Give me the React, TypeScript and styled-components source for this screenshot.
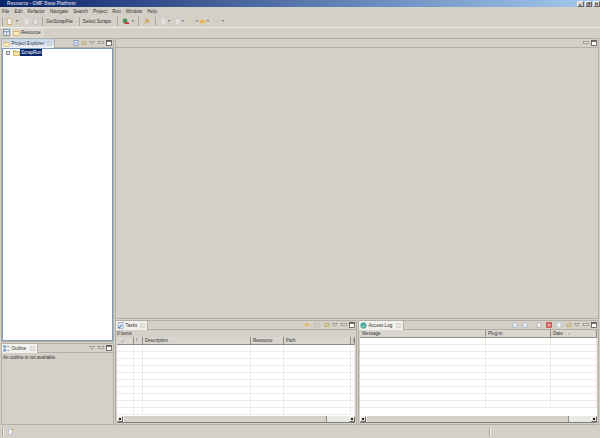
import React from "react";
import styled, { createGlobalStyle } from "styled-components";

const GlobalStyle = createGlobalStyle`
  html, body {
    margin: 0;
    padding: 0;
    background: #d4d0c8;
  }
  * {
    box-sizing: border-box;
  }
`;

const Window = styled.div`
  width: 600px;
  height: 438px;
  display: flex;
  flex-direction: column;
  overflow: hidden;
  background: #d4d0c8;
  color: #333;
  font-family: "Liberation Sans", Arial, sans-serif;
  font-size: 4.6px;
  line-height: 7px;
`;

const TitleBar = styled.div`
  height: 7px;
  flex: none;
  display: flex;
  align-items: center;
  padding: 0 0 0 7px;
  background: linear-gradient(90deg, #0a246a 0%, #a6caf0 100%);
  color: #c3c9dc;
  font-weight: bold;
  font-size: 4.7px;
`;

const TitleText = styled.span`
  flex: 1;
`;

const WinButton = styled.span`
  width: 7px;
  height: 6px;
  margin-left: 1px;
  background: #d4d0c8;
  border-top: 1px solid #eee;
  border-left: 1px solid #eee;
  border-right: 1px solid #666;
  border-bottom: 1px solid #666;
  display: flex;
  svg {
    width: 100%;
    height: 100%;
    display: block;
  }
`;

const MenuBar = styled.div`
  height: 8px;
  flex: none;
  display: flex;
  gap: 5.1px;
  padding: 1px 0 0 2px;
  align-items: center;
`;

const MenuItem = styled.span`
  white-space: nowrap;
`;

const ToolBar = styled.div`
  height: 12px;
  flex: none;
  display: flex;
  align-items: center;
  padding-left: 2px;
`;

const Sep = styled.span<{ $l?: number; $r?: number }>`
  width: 1px;
  height: 9px;
  flex: none;
  background: #aaa69c;
  margin-left: ${(p) => p.$l ?? 0}px;
  margin-right: ${(p) => p.$r ?? 0}px;
`;

const ToolIcon = styled.span<{ $dim?: boolean; $r?: number }>`
  width: 7px;
  height: 7px;
  flex: none;
  margin-right: ${(p) => p.$r ?? 0}px;
  display: inline-flex;
  opacity: ${(p) => (p.$dim ? 0.55 : 1)};
  svg {
    width: 100%;
    height: 100%;
    display: block;
  }
`;

const Caret = styled.span<{ $l: number; $r: number }>`
  width: 0;
  height: 0;
  flex: none;
  margin-left: ${(p) => p.$l}px;
  margin-right: ${(p) => p.$r}px;
  border-left: 1.5px solid transparent;
  border-right: 1.5px solid transparent;
  border-top: 2px solid #666;
`;

const ToolText = styled.span`
  white-space: nowrap;
`;

const PerspectiveBar = styled.div`
  height: 11px;
  flex: none;
  display: flex;
  align-items: center;
  padding: 0 0 1px 3px;
  border-top: 1px solid #ecebe6;
`;

const PerspectiveTab = styled.div`
  height: 10px;
  width: 33px;
  margin-left: 1px;
  display: flex;
  align-items: center;
  padding-left: 1px;
  gap: 1px;
  background: #dcd9d2;
  border-left: 1px solid #f0eeea;
`;

const Main = styled.div`
  flex: 1;
  min-height: 0;
  display: grid;
  grid-template-columns: 113px 1fr;
  gap: 1px;
  padding: 0 1px;
`;

const Column = styled.div`
  display: flex;
  flex-direction: column;
  gap: 1px;
  min-height: 0;
  min-width: 0;
`;

const Pane = styled.div<{ $h?: number; $grow?: boolean }>`
  ${(p) => (p.$h ? `height: ${p.$h}px; flex: none;` : "")}
  ${(p) => (p.$grow ? "flex: 1;" : "")}
  min-width: 0;
  min-height: 0;
  display: flex;
  flex-direction: column;
  border: 1px solid #b3afa5;
`;

const TabRow = styled.div`
  height: 9px;
  flex: none;
  display: flex;
  align-items: stretch;
  border-bottom: 1px solid #b3afa5;
`;

const Tab = styled.div<{ $w: number; $active?: boolean }>`
  width: ${(p) => p.$w}px;
  flex: none;
  display: flex;
  align-items: center;
  gap: 1.5px;
  padding-left: 1px;
  margin-bottom: -1px;
  background: ${(p) => (p.$active ? "linear-gradient(180deg, #c3d4ea, #eef2f8)" : "#f1f0ec")};
  border-right: 1px solid #b3afa5;
  white-space: nowrap;
`;

const TabLabel = styled.span`
  flex: 1;
`;

const TabClose = styled.span`
  width: 5px;
  height: 5px;
  margin-right: 2px;
  flex: none;
  display: flex;
  svg {
    width: 100%;
    height: 100%;
  }
`;

const TabTools = styled.div`
  flex: 1;
  display: flex;
  justify-content: flex-end;
  align-items: center;
  padding-right: 1px;
`;

const MiniIcon = styled.span<{ $l?: number }>`
  width: 6px;
  height: 6px;
  flex: none;
  margin-left: ${(p) => p.$l ?? 2.3}px;
  display: flex;
  svg {
    width: 100%;
    height: 100%;
    display: block;
  }
`;

const TreeBody = styled.div`
  flex: 1;
  background: #fff;
  border: 1px solid #7f9db9;
  padding: 0 0 0 3px;
  display: flex;
  align-items: flex-start;
`;

const Expander = styled.span`
  width: 4px;
  height: 4px;
  margin-top: 1.5px;
  border: 1px solid #888;
  background: #eee;
  flex: none;
`;

const TreeFolder = styled(ToolIcon)`
  margin: 0 0 0 3px;
`;

const Selected = styled.span`
  background: #0a246a;
  color: #fff;
  padding: 0 1px;
  height: 7px;
`;

const PaneNote = styled.div`
  padding: 1px;
`;

const Editor = styled(Pane)`
  height: 281px;
  flex: none;
`;

const EditorHead = styled.div`
  height: 9px;
  flex: none;
  display: flex;
  justify-content: flex-end;
  align-items: center;
  padding-right: 1px;
  border-bottom: 1px solid #b3afa5;
`;

const BottomRow = styled.div`
  flex: 1;
  min-height: 0;
  display: grid;
  grid-template-columns: 242px 1fr;
  gap: 1px;
`;

const ItemCount = styled.div`
  height: 7px;
  flex: none;
  padding-left: 1px;
`;

const TableWrap = styled.div`
  flex: 1;
  min-height: 0;
  margin: 0 1px 1px 1px;
  display: flex;
  flex-direction: column;
  background: #fff;
`;

const HeaderRow = styled.div<{ $cols: string }>`
  height: 8px;
  flex: none;
  display: grid;
  grid-template-columns: ${(p) => p.$cols};
  background: #d9d6cf;
  border-bottom: 1px solid #8f8c84;
`;

const HeaderCell = styled.div`
  padding-left: 2px;
  border-right: 1px solid #8f8c84;
  white-space: nowrap;
  overflow: hidden;
  display: flex;
  align-items: center;
  gap: 5px;
`;

const SortMark = styled.span`
  width: 0;
  height: 0;
  border-left: 1.5px solid transparent;
  border-right: 1.5px solid transparent;
  border-top: 2px solid #aaa;
`;

const CheckMark = styled.svg`
  width: 4px;
  height: 4px;
  margin-left: 2px;
`;

const Rows = styled.div`
  flex: 1;
  min-height: 0;
  overflow: hidden;
`;

const Row = styled.div<{ $cols: string }>`
  height: 7px;
  display: grid;
  grid-template-columns: ${(p) => p.$cols};
  border-bottom: 1px solid #ecebe6;
`;

const Cell = styled.div`
  border-right: 1px solid #ecebe6;
`;

const HScroll = styled.div`
  height: 7px;
  flex: none;
  display: flex;
  background: #d4d0c8;
  border-bottom: 1px solid #808080;
`;

const ScrollBtn = styled.span`
  width: 6px;
  flex: none;
  background: #e2dfd9;
  border: 1px solid;
  border-color: #f4f3f0 #6d6b65 #6d6b65 #f4f3f0;
  display: flex;
  align-items: center;
  justify-content: center;
  &::after {
    content: "";
    width: 2px;
    height: 2px;
    background: #222;
  }
`;

const ScrollThumb = styled.span`
  flex: 1;
  border-left: 1px solid #f4f3f0;
`;

const ScrollTrack = styled.span<{ $w: number }>`
  width: ${(p) => p.$w}px;
  flex: none;
  background: #ebe9e4;
  border-left: 1px solid #8f8c84;
`;

const StatusBar = styled.div`
  height: 13px;
  flex: none;
  display: flex;
  align-items: center;
  padding-left: 2px;
`;

const StatusGrip = styled.span<{ $left: number }>`
  width: 1px;
  height: 8px;
  flex: none;
  margin-left: ${(p) => p.$left}px;
  background: #aaa69c;
  box-shadow: 1px 0 0 #f0eeea;
`;

const StatusIcon = styled(ToolIcon)`
  margin-left: 5px;
`;

const Folder = ({ open = "#f0c860" }: { open?: string }) => (
  <svg viewBox="0 0 8 8">
    <path d="M0.5 2h3l1 1h3v4.5h-7z" fill={open} stroke="#b08a30" strokeWidth="0.6" />
    <path d="M1 4h6v3H1z" fill="#fbe9a8" />
  </svg>
);

const Perspective = () => (
  <svg viewBox="0 0 8 8">
    <path d="M1 3l2.5-2.5L5 3z" fill="#f4cd66" />
    <rect x="1" y="3" width="6" height="4.5" fill="#fdf1c4" stroke="#c89a3a" strokeWidth="0.6" />
  </svg>
);

const Page = ({ c = "#c7ccd6" }: { c?: string }) => (
  <svg viewBox="0 0 8 8">
    <path d="M1.5 0.5h3.5l1.5 1.5v5.5h-5z" fill="#eef0f3" stroke={c} strokeWidth="0.8" />
  </svg>
);

const Arrow = ({ c, left = false }: { c: string; left?: boolean }) => (
  <svg viewBox="0 0 8 8">
    <path d={left ? "M0.5 4L4 1v2h3.5v2H4v2z" : "M7.5 4L4 1v2H0.5v2H4v2z"} fill={c} />
  </svg>
);

const Cross = ({ c = "#9a988f", w = 0.8 }: { c?: string; w?: number }) => (
  <svg viewBox="0 0 8 8">
    <path d="M1 1h2l1 1 1-1h2v2L6 4l1 1v2H5L4 6 3 7H1V5l1-1-1-1z" fill="none" stroke={c} strokeWidth={w} />
  </svg>
);

const Sync = () => (
  <svg viewBox="0 0 8 8">
    <path d="M1 1.5h3v1.5H1zM4 5h3v1.5H4z" fill="#e3b341" />
    <path d="M4 2.2l2.4 0 0 2.4M4 5.8L1.6 5.8 1.6 3.4" fill="none" stroke="#7d7a3c" strokeWidth="0.7" />
  </svg>
);

const ViewMenu = () => (
  <svg viewBox="0 0 6 6">
    <path d="M0.7 1.5h4.6L3 4.2z" fill="#e9e7e2" stroke="#77756e" strokeWidth="0.6" />
  </svg>
);

const Minimize = () => (
  <svg viewBox="0 0 6 6">
    <rect x="0.5" y="1.5" width="5" height="2" fill="#e9e7e2" stroke="#77756e" strokeWidth="0.6" />
  </svg>
);

const Maximize = () => (
  <svg viewBox="0 0 6 6">
    <rect x="0.5" y="0.5" width="5" height="5" fill="#fff" stroke="#55534d" strokeWidth="0.8" />
    <rect x="0.5" y="0.5" width="5" height="1.3" fill="#55534d" />
  </svg>
);

const PaneControls = () => (
  <>
    <MiniIcon>
      <ViewMenu />
    </MiniIcon>
    <MiniIcon>
      <Minimize />
    </MiniIcon>
    <MiniIcon>
      <Maximize />
    </MiniIcon>
  </>
);

const CloseGlyph = () => (
  <TabClose>
    <Cross c="#a3a198" w={0.7} />
  </TabClose>
);

const menus = ["File", "Edit", "Refactor", "Navigate", "Search", "Project", "Run", "Window", "Help"];

const taskCols = "17px 9px 108px 33px 67px 1fr";
const logCols = "126px 65px 1fr";

const rowKeys = Array.from({ length: 10 }, (_, i) => i);

function DataTable({ cols, heads }: { cols: string; heads: React.ReactNode[] }) {
  return (
    <TableWrap>
      <HeaderRow $cols={cols}>
        {heads.map((h, i) => (
          <HeaderCell key={i}>{h}</HeaderCell>
        ))}
      </HeaderRow>
      <Rows>
        {rowKeys.map((r) => (
          <Row key={r} $cols={cols}>
            {heads.map((_, i) => (
              <Cell key={i} />
            ))}
          </Row>
        ))}
      </Rows>
      <HScroll>
        <ScrollBtn />
        <ScrollThumb />
        <ScrollTrack $w={23} />
        <ScrollBtn />
      </HScroll>
    </TableWrap>
  );
}

export default function App() {
  return (
    <Window>
      <GlobalStyle />
      <TitleBar>
        <TitleText>Resource - GMF Base Platform</TitleText>
        <WinButton>
          <svg viewBox="0 0 6 5">
            <path d="M1 4h3" stroke="#111" strokeWidth="1" />
          </svg>
        </WinButton>
        <WinButton>
          <svg viewBox="0 0 6 5">
            <rect x="1" y="1.5" width="3" height="3" fill="none" stroke="#111" strokeWidth="0.7" />
            <path d="M2 0.7h3v2.5" fill="none" stroke="#111" strokeWidth="0.7" />
          </svg>
        </WinButton>
        <WinButton>
          <svg viewBox="0 0 6 5">
            <path d="M1 0.7l4 3.6M5 0.7l-4 3.6" stroke="#111" strokeWidth="0.9" />
          </svg>
        </WinButton>
      </TitleBar>
      <MenuBar>
        {menus.map((m) => (
          <MenuItem key={m}>{m}</MenuItem>
        ))}
      </MenuBar>
      <ToolBar>
        <Sep $r={3} />
        <ToolIcon>
          <Page c="#d0a040" />
        </ToolIcon>
        <Caret $l={3} $r={5} />
        <ToolIcon $dim $r={2}>
          <Page />
        </ToolIcon>
        <ToolIcon $dim>
          <Page c="#aaa" />
        </ToolIcon>
        <Sep $l={3} $r={3} />
        <ToolText>GetScrapFile</ToolText>
        <Sep $l={6} $r={3} />
        <ToolText>Select Scraps</ToolText>
        <Sep $l={6} $r={4} />
        <ToolIcon>
          <svg viewBox="0 0 8 8">
            <circle cx="3.5" cy="3.5" r="2.8" fill="#3f9a55" />
            <rect x="3" y="5" width="5" height="1.8" fill="#d8232a" />
          </svg>
        </ToolIcon>
        <Caret $l={3} $r={4} />
        <Sep $r={4} />
        <ToolIcon>
          <svg viewBox="0 0 8 8">
            <path d="M1 7l3-3M4 1l3 3-2 1-2-2z" fill="#e5b85a" stroke="#b08030" strokeWidth="0.7" />
          </svg>
        </ToolIcon>
        <Sep $l={5} $r={4} />
        <ToolIcon $dim>
          <Page />
        </ToolIcon>
        <Caret $l={1} $r={4} />
        <ToolIcon $dim>
          <Page />
        </ToolIcon>
        <Caret $l={1} $r={4} />
        <ToolIcon $dim>
          <Arrow c="#d9cc9c" left />
        </ToolIcon>
        <Caret $l={1} $r={1} />
        <ToolIcon>
          <Arrow c="#e8b53c" left />
        </ToolIcon>
        <Caret $l={1} $r={5} />
        <ToolIcon $dim>
          <Arrow c="#cfcab8" />
        </ToolIcon>
        <Caret $l={1} $r={0} />
      </ToolBar>
      <PerspectiveBar>
        <ToolIcon>
          <svg viewBox="0 0 8 8">
            <rect x="0.5" y="0.5" width="7" height="7" fill="#e9eef5" stroke="#5a6a80" strokeWidth="0.7" />
            <path d="M0.5 3h7M4 3v4.5" stroke="#5a80b0" strokeWidth="0.8" />
          </svg>
        </ToolIcon>
        <PerspectiveTab>
          <ToolIcon>
            <Perspective />
          </ToolIcon>
          Resource
        </PerspectiveTab>
      </PerspectiveBar>
      <Main>
        <Column>
          <Pane $h={304}>
            <TabRow>
              <Tab $w={53} $active>
                <ToolIcon>
                  <Perspective />
                </ToolIcon>
                <TabLabel>Project Explorer</TabLabel>
                <CloseGlyph />
              </Tab>
              <TabTools>
                <MiniIcon>
                  <svg viewBox="0 0 6 6">
                    <rect x="1" y="0.5" width="4" height="5" fill="#dfe8f6" stroke="#6f8fc0" strokeWidth="0.7" />
                    <path d="M1.8 3h2.4" stroke="#6f8fc0" strokeWidth="0.7" />
                  </svg>
                </MiniIcon>
                <MiniIcon>
                  <Sync />
                </MiniIcon>
                <PaneControls />
              </TabTools>
            </TabRow>
            <TreeBody>
              <Expander />
              <TreeFolder>
                <Folder />
              </TreeFolder>
              <Selected>ScrapRun</Selected>
            </TreeBody>
          </Pane>
          <Pane $grow>
            <TabRow>
              <Tab $w={36}>
                <ToolIcon>
                  <svg viewBox="0 0 8 8">
                    <rect x="0.5" y="0.5" width="2.5" height="2.5" fill="#4f86c6" />
                    <rect x="0.5" y="5" width="2.5" height="2.5" fill="#4f86c6" />
                    <path d="M4 1.7h3.5M4 6.2h3.5M2 3v2" stroke="#6f8fb8" strokeWidth="0.8" />
                  </svg>
                </ToolIcon>
                <TabLabel>Outline</TabLabel>
                <CloseGlyph />
              </Tab>
              <TabTools>
                <PaneControls />
              </TabTools>
            </TabRow>
            <PaneNote>An outline is not available.</PaneNote>
          </Pane>
        </Column>
        <Column>
          <Editor>
            <EditorHead>
              <MiniIcon>
                <Minimize />
              </MiniIcon>
              <MiniIcon>
                <Maximize />
              </MiniIcon>
            </EditorHead>
          </Editor>
          <BottomRow>
            <Pane>
              <TabRow>
                <Tab $w={32}>
                  <ToolIcon>
                    <svg viewBox="0 0 8 8">
                      <rect x="1.5" y="0.5" width="5.5" height="7" fill="#dbe6f5" stroke="#7b94b8" strokeWidth="0.6" />
                      <path d="M0.5 5l2 2 3-4" fill="none" stroke="#3b6cb0" strokeWidth="1" />
                    </svg>
                  </ToolIcon>
                  <TabLabel>Tasks</TabLabel>
                  <CloseGlyph />
                </Tab>
                <TabTools>
                  <MiniIcon>
                    <Arrow c="#dfb95c" left />
                  </MiniIcon>
                  <MiniIcon $l={4}>
                    <Cross c="#b9b5aa" />
                  </MiniIcon>
                  <MiniIcon $l={4}>
                    <Sync />
                  </MiniIcon>
                  <PaneControls />
                </TabTools>
              </TabRow>
              <ItemCount>0 items</ItemCount>
              <DataTable
                cols={taskCols}
                heads={[
                  <CheckMark key="check" viewBox="0 0 4 4">
                    <path d="M0.5 2l1 1.3L3.5 0.7" fill="none" stroke="#8a8f98" strokeWidth="0.7" />
                  </CheckMark>,
                  "!",
                  "Description",
                  "Resource",
                  "Path",
                  "L",
                ]}
              />
            </Pane>
            <Pane>
              <TabRow>
                <Tab $w={45}>
                  <ToolIcon>
                    <svg viewBox="0 0 8 8">
                      <circle cx="4" cy="4" r="3.4" fill="#3fa78d" stroke="#7fb0c8" strokeWidth="0.6" />
                      <path d="M2 4.4l1.5 1.4L6 2.6" fill="none" stroke="#e9f6ef" strokeWidth="0.8" />
                    </svg>
                  </ToolIcon>
                  <TabLabel>Access Log</TabLabel>
                  <CloseGlyph />
                </Tab>
                <TabTools>
                  <MiniIcon>
                    <Page c="#8fa9cc" />
                  </MiniIcon>
                  <MiniIcon $l={4}>
                    <Page c="#8fa9cc" />
                  </MiniIcon>
                  <MiniIcon $l={8}>
                    <Page c="#9a9a9a" />
                  </MiniIcon>
                  <MiniIcon $l={4}>
                    <Cross c="#d8232a" w={1.4} />
                  </MiniIcon>
                  <MiniIcon $l={4}>
                    <Page c="#b9c4d4" />
                  </MiniIcon>
                  <MiniIcon $l={4}>
                    <Sync />
                  </MiniIcon>
                  <PaneControls />
                </TabTools>
              </TabRow>
              <DataTable
                cols={logCols}
                heads={[
                  "Message",
                  "Plug-in",
                  <React.Fragment key="date">
                    Date
                    <SortMark />
                  </React.Fragment>,
                ]}
              />
            </Pane>
          </BottomRow>
        </Column>
      </Main>
      <StatusBar>
        <StatusGrip $left={0} />
        <StatusIcon>
          <svg viewBox="0 0 8 8">
            <rect x="1" y="2" width="3.5" height="5" fill="#fff" stroke="#9aa8bc" strokeWidth="0.6" />
            <path d="M4.5 2.5L7 1" stroke="#e0b040" strokeWidth="1.2" />
          </svg>
        </StatusIcon>
        <StatusGrip $left={474} />
      </StatusBar>
    </Window>
  );
}
